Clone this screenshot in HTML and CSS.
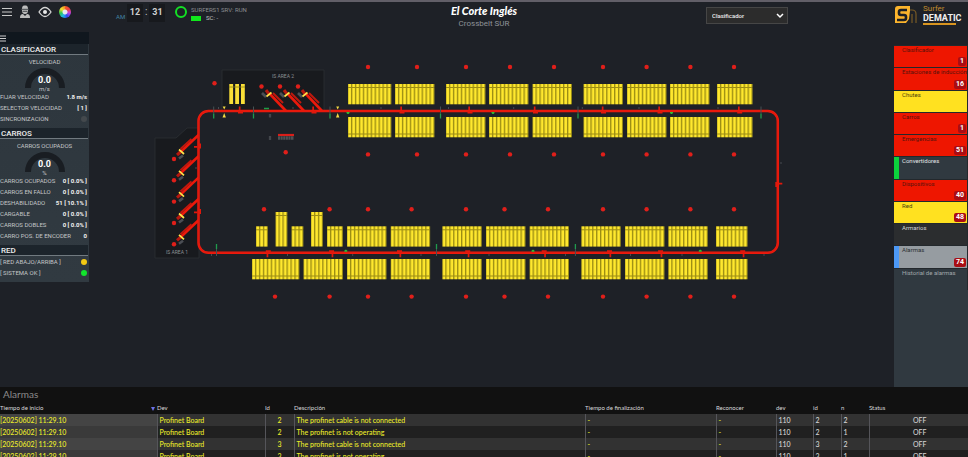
FILE: index.html
```html
<!DOCTYPE html>
<html lang="es">
<head>
<meta charset="utf-8">
<meta name="viewport" content="width=device-width, initial-scale=1">
<title>Crossbelt SUR</title>
<link rel="stylesheet" href="styles.css">
</head>
<body>
<header class="topbar">
  <div class="top-left">
  <div class="tools">
    <button class="tool" aria-label="Menú"><svg width="10" height="10" viewBox="0 0 10 10"><path d="M0 1.5h10M0 5h10M0 8.5h10" stroke="#c9c9c9"/></svg></button>
    <button class="tool" aria-label="Usuario"><svg width="12" height="14" viewBox="0 0 12 14" fill="#bcbcbc"><path d="M3 3.5C3 1 4.500 .5 6 .5S9 1 9 3.500V6C9 8 7.500 9 6 9S3 8 3 6zM1 13c0-3 1-4 3-4l2 2 2-2c2 0 3 1 3 4z"/><path d="M2 4.300h8M3.600 6.300h4.800" stroke="#43464a" fill="none"/></svg></button>
    <button class="tool" aria-label="Vista"><svg width="14" height="12" viewBox="0 0 14 12"><path d="M1 6Q7-3 13 6Q7 15 1 6z" fill="none" stroke="#d5d5d5" stroke-width="1.3"/><circle cx="7" cy="6" r="2" fill="#e8e8e8"/></svg></button>
    <button class="tool" aria-label="Colores"><span class="wheel"></span></button>
  </div>
  <div class="clock"><span class="ampm">AM</span><span class="digits">12</span><span class="colon">:</span><span class="digits">31</span></div>
  <div class="server">
    <span class="ring"></span>
    <div><div>SURFERS1 SRV: RUN</div><div class="sc"><i class="led"></i>SC: -</div></div>
  </div>
  </div>
  <div class="brand"><div class="brand-name">El Corte Inglés</div><div class="brand-sub">Crossbelt SUR</div></div>
  <div class="top-right">
  <div class="picker">
    <select aria-label="Vista activa"><option>Clasificador</option></select>
    <svg class="chevron" width="8" height="6" viewBox="0 0 8 6"><path d="M1 1l3 3 3-3" fill="none" stroke="#fff" stroke-width="1.500"/></svg>
  </div>
  <div class="vendor">
    <svg width="24" height="20" viewBox="0 0 24 20" fill="none"><path d="M4 1h12v5l-1 8-3 4H1V4q0-3 3-3z" fill="#fcb42c"/><path d="M13 5H7Q5 5 5 7v1q0 2 2 2h3q2 0 2 2v1q0 2-2 2H3" stroke="#1d2026" stroke-width="2.600"/><path d="M16 5h2q4 0 4 4v9M18 9v9" stroke="#785a25" stroke-width="1.200"/></svg>
    <div class="vendor-text"><span>Surfer</span><strong>DEMATIC</strong></div>
  </div>
  </div>
</header>

<main class="work">
  <aside class="side">
    <button class="side-menu" aria-label="Panel"><svg width="7" height="7" viewBox="0 0 7 7"><path d="M0 1h6M0 3.500h6M0 6h6" stroke="#ccc"/></svg></button>
    <section>
      <h2>CLASIFICADOR</h2>
      <div class="gauge"><p>VELOCIDAD</p>
        <div class="dial"><svg width="42" height="21" viewBox="0 0 42 21"><path d="M4 21a17 17 0 0 1 34 0" fill="none" stroke="#191d22" stroke-width="6"/></svg><b>0.0</b></div><small>m/s</small></div>
      <dl>
        <div><dt>FIJAR VELOCIDAD</dt><dd>1.8 m/s</dd></div>
        <div><dt>SELECTOR VELOCIDAD</dt><dd>[ 1 ]</dd></div>
        <div><dt>SINCRONIZACIÓN</dt><dd><i class="dot off"></i></dd></div>
      </dl>
    </section>
    <section>
      <h2>CARROS</h2>
      <div class="gauge"><p>CARROS OCUPADOS</p>
        <div class="dial"><svg width="42" height="21" viewBox="0 0 42 21"><path d="M4 21a17 17 0 0 1 34 0" fill="none" stroke="#191d22" stroke-width="6"/></svg><b>0.0</b></div><small>%</small></div>
      <dl>
        <div><dt>CARROS OCUPADOS</dt><dd>0 [ 0.0% ]</dd></div>
        <div><dt>CARROS EN FALLO</dt><dd>0 [ 0.0% ]</dd></div>
        <div><dt>DESHABILIDADO</dt><dd>51 [ 10.1% ]</dd></div>
        <div><dt>CARGABLE</dt><dd>0 [ 0.0% ]</dd></div>
        <div><dt>CARROS DOBLES</dt><dd>0 [ 0.0% ]</dd></div>
        <div><dt>CARRO POS. DE ENCODER</dt><dd>0</dd></div>
      </dl>
    </section>
    <section>
      <h2>RED</h2>
      <dl>
        <div><dt>[ RED ABAJO/ARRIBA ]</dt><dd><i class="dot warn"></i></dd></div>
        <div><dt>[ SISTEMA OK ]</dt><dd><i class="dot ok"></i></dd></div>
      </dl>
    </section>
  </aside>

  <svg class="plant" viewBox="89 32 805 355" role="img" aria-label="Plano del clasificador">
    <defs>
      <pattern id="up" width="3.94" height="21" patternUnits="userSpaceOnUse"><rect width="3.94" height="21" fill="#81750c"/><rect x=".3" width="2.850" height="21" fill="#ffe82e"/><rect y="3" width="3.940" height="1" fill="#9d8d14"/></pattern>
      <pattern id="down" width="3.94" height="21" patternUnits="userSpaceOnUse"><rect width="3.94" height="21" fill="#81750c"/><rect x=".3" width="2.850" height="21" fill="#ffe82e"/><rect y="16.500" width="3.940" height="1" fill="#9d8d14"/></pattern>
      <pattern id="tall" width="3.94" height="35" patternUnits="userSpaceOnUse"><rect width="3.94" height="35" fill="#81750c"/><rect x=".3" width="2.850" height="35" fill="#ffe82e"/><rect y="3" width="3.940" height="1" fill="#9d8d14"/></pattern>
      <g id="u12"><rect width="43.300" height="20.300" fill="url(#up)"/></g>
      <g id="u10"><rect width="39.400" height="20.300" fill="url(#up)"/></g>
      <g id="u9"><rect width="35.500" height="20.300" fill="url(#up)"/></g>
      <g id="u8"><rect width="31.500" height="20.300" fill="url(#up)"/></g>
      <g id="u4"><rect width="15.800" height="20.300" fill="url(#up)"/></g>
      <g id="u3"><rect width="11.800" height="20.300" fill="url(#up)"/></g>
      <g id="t3"><rect width="11.800" height="34.500" fill="url(#tall)"/></g>
      <g id="d12"><rect width="47.300" height="20.300" fill="url(#down)"/></g>
      <g id="d11"><rect width="43.300" height="20.300" fill="url(#down)"/></g>
      <g id="d10"><rect width="39.400" height="20.300" fill="url(#down)"/></g>
      <g id="d9"><rect width="35.500" height="20.300" fill="url(#down)"/></g>
      <g id="d8"><rect width="31.500" height="20.300" fill="url(#down)"/></g>
      <circle id="p" r="2.200" fill="#e01f1a"/>
      <g id="post"><path d="M0-5V2" stroke="#465153"/><path d="M0 2v5" stroke="#1f9b4d" stroke-width="1.300"/></g>
      <g id="stop" fill="#e0180c"><path d="M-.700-4.500h1.700V-1h-1.700zM-1.500 0h5v2.500h-5z"/></g>
      <path id="go" d="M-1.500 1h3v1l-1 1h-1l-1-1z" fill="#32bd35"/>
      <path id="cone" d="M-1.500-5h3L0-2zM0 1.500L1.700 6h-3.400z" fill="#f4d943"/>
      <g id="laneB"><path d="M0 0L-17 -18" stroke="#ec190b" stroke-width="2.600"/><path d="M-3-8L-13-18" stroke="#bf180e" stroke-width="2"/><path d="M-24-18l4 4" stroke="#4b4e54" stroke-width="2.600"/><path d="M-20-21l3 4" stroke="#b6180f" stroke-width="3"/><path d="M-19.500-14.500l5-4" stroke="#ffe44a" stroke-width="1.700"/></g>
      <g id="laneA"><path d="M0 0L-19 18" stroke="#ec190b" stroke-width="2.600"/><path d="M-7 4L-18 14" stroke="#bf180e" stroke-width="2"/><path d="M-19.500 23.500l4-3" stroke="#4b4e54" stroke-width="2.600"/><path d="M-21.500 20l4-3.500" stroke="#b6180f" stroke-width="3"/><path d="M-19.500 14.500l5 4.500" stroke="#ffe44a" stroke-width="1.700"/><use href="#p" x="-24.500" y="24"/></g>
    </defs>

    <path d="M155 138h21l11-10h12v130h-44z" fill="#181a1e" stroke="#2c3034" stroke-width=".8"/>
    <path d="M222 70h102v41H222z" fill="#181a1e" stroke="#2c3034" stroke-width=".8"/>
    <text class="area" x="283" y="78">IS AREA 2</text>
    <text class="area" x="177" y="254">IS AREA 1</text>

    <use href="#laneB" x="286" y="111"/><use href="#laneB" x="304" y="111"/><use href="#laneB" x="322" y="111"/>
    <use href="#laneA" x="198.500" y="135"/><use href="#laneA" x="198.500" y="156.300"/><use href="#laneA" x="198.500" y="177.600"/><use href="#laneA" x="198.500" y="199"/><use href="#laneA" x="198.500" y="220.300"/>

    <rect x="198.500" y="111" width="579.300" height="141.700" rx="10" fill="none" stroke="#f01a0c" stroke-width="2.500"/>
    <rect x="198.500" y="111" width="579.300" height="141.700" rx="10" fill="none" stroke="#c41a12" stroke-width=".4"/>

    <path d="M229.300 84h3.800v20h-3.800zM235.200 84h3.800v20h-3.800zM241 84h3.800v20h-3.800z" fill="#f9df37"/>
    <path d="M229 87h16" stroke="#8e8118" stroke-width=".8"/>

    <g>
      <use href="#u12" transform="translate(348 84)"/><use href="#u10" transform="translate(395 84)"/><use href="#u10" transform="translate(446 84)"/><use href="#u10" transform="translate(489 84)"/><use href="#u10" transform="translate(532.500 84)"/><use href="#u10" transform="translate(583.500 84)"/><use href="#u10" transform="translate(627 84)"/><use href="#u10" transform="translate(670 84)"/><use href="#u9" transform="translate(717 84)"/>
    </g>
    <g>
      <use href="#d11" transform="translate(348 117)"/><use href="#d10" transform="translate(395 117)"/><use href="#d10" transform="translate(446 117)"/><use href="#d10" transform="translate(489 117)"/><use href="#d10" transform="translate(532.500 117)"/><use href="#d10" transform="translate(583.500 117)"/><use href="#d10" transform="translate(627 117)"/><use href="#d10" transform="translate(670 117)"/><use href="#d9" transform="translate(717 117)"/>
    </g>
    <g>
      <use href="#u3" transform="translate(256 226.300)"/><use href="#t3" transform="translate(275.500 212)"/><use href="#u3" transform="translate(291.500 226.300)"/><use href="#t3" transform="translate(311 212)"/><use href="#u4" transform="translate(327 226.300)"/><use href="#u10" transform="translate(347 226.300)"/><use href="#u10" transform="translate(390.700 226.300)"/><use href="#u10" transform="translate(442.300 226.300)"/><use href="#u10" transform="translate(486 226.300)"/><use href="#u10" transform="translate(529.600 226.300)"/><use href="#u10" transform="translate(581.300 226.300)"/><use href="#u10" transform="translate(625 226.300)"/><use href="#u10" transform="translate(668.300 226.300)"/><use href="#u8" transform="translate(716 226.300)"/>
    </g>
    <g>
      <use href="#d12" transform="translate(252 259)"/><use href="#d10" transform="translate(303.500 259)"/><use href="#d10" transform="translate(347 259)"/><use href="#d10" transform="translate(390.700 259)"/><use href="#d10" transform="translate(442.300 259)"/><use href="#d10" transform="translate(486 259)"/><use href="#d10" transform="translate(529.600 259)"/><use href="#d10" transform="translate(581.300 259)"/><use href="#d10" transform="translate(625 259)"/><use href="#d10" transform="translate(668.300 259)"/><use href="#d8" transform="translate(716 259)"/>
    </g>

    <use href="#p" x="214.500" y="83.300"/><use href="#p" x="261.500" y="86.500"/><use href="#p" x="280" y="86.500"/><use href="#p" x="298" y="86.500"/><use href="#p" x="285.700" y="152.300"/>
    <g id="top-row"><use href="#p" x="368" y="67"/><use href="#p" x="417" y="67"/><use href="#p" x="466" y="67"/><use href="#p" x="510" y="67"/><use href="#p" x="554" y="67"/><use href="#p" x="603" y="67"/><use href="#p" x="646.600" y="67"/><use href="#p" x="690.400" y="67"/><use href="#p" x="734" y="67"/></g>
    <use href="#top-row" y="87.400"/>
    <g id="low-row"><use href="#p" x="329.600" y="209.200"/><use href="#p" x="368" y="209.200"/><use href="#p" x="411.600" y="209.200"/><use href="#p" x="466" y="209.200"/><use href="#p" x="504.500" y="209.200"/><use href="#p" x="548" y="209.200"/><use href="#p" x="603" y="209.200"/><use href="#p" x="646.600" y="209.200"/><use href="#p" x="690.400" y="209.200"/><use href="#p" x="734" y="209.200"/></g>
    <use href="#low-row" y="87.400"/><use href="#p" x="264" y="209.200"/><use href="#p" x="275" y="296.600"/>

    <use href="#post" x="213.700" y="111.500"/><use href="#post" x="253.500" y="111.500"/><use href="#post" x="330" y="111.500"/><use href="#post" x="440.500" y="111.500"/><use href="#post" x="578" y="111.500"/><use href="#post" x="761" y="111.500"/>
    <use href="#post" transform="translate(216.500 251) scale(1 -1)"/><use href="#post" transform="translate(436.500 251) scale(1 -1)"/><use href="#post" transform="translate(575.400 251) scale(1 -1)"/>
    <use href="#cone" x="224.200" y="111.500"/><use href="#cone" x="337.700" y="111.500"/>
    <use href="#stop" x="239.500" y="111"/><use href="#stop" x="313" y="111"/><use href="#stop" x="401" y="111"/><use href="#stop" x="469" y="111"/><use href="#stop" x="534.500" y="111"/><use href="#stop" x="602.500" y="111"/><use href="#stop" x="659" y="111"/><use href="#stop" x="738.700" y="111"/>
    <use href="#stop" transform="translate(267.300 252.700) scale(1 -1)"/><use href="#stop" transform="translate(332.600 252.700) scale(-1 -1)"/><use href="#stop" transform="translate(400.500 252.700) scale(-1 -1)"/><use href="#stop" transform="translate(468.700 252.700) scale(-1 -1)"/><use href="#stop" transform="translate(545.200 252.700) scale(-1 -1)"/><use href="#stop" transform="translate(610.500 252.700) scale(-1 -1)"/><use href="#stop" transform="translate(661.600 252.700) scale(-1 -1)"/><use href="#stop" transform="translate(743.700 252.700) scale(-1 -1)"/>
    <use href="#stop" transform="translate(198.500 147) rotate(-90)"/><use href="#stop" transform="translate(198.500 212.500) rotate(-90)"/><use href="#stop" transform="translate(777.800 183.500) rotate(90)"/>
    <use href="#go" x="348" y="111"/><use href="#go" x="493" y="111"/><use href="#go" x="671.500" y="111"/>
    <use href="#go" transform="translate(345.800 252.700) scale(1 -1)"/><use href="#go" transform="translate(533 252.700) scale(1 -1)"/><use href="#go" transform="translate(700.300 252.700) scale(1 -1)"/>
    <path d="M264 108.500h5" stroke="#1d9d48" stroke-width="1.500"/>
    <path d="M278 135h16" stroke="#d91e19" stroke-width="2.200"/>
    <path d="M278 138h16" stroke="#4e5154" stroke-width="3.500" stroke-dasharray="2.100 .5"/>
    <path d="M270 114v3.500M270 136v4" stroke="#42464b" stroke-width="2.300"/>
    <path d="M218.500 107v2M293 107v2M381 107v2M448.500 107v2M513.700 107v2M582.300 107v2M639 107v2M718 107v2M211.500 254v2M287.500 254v2M352.700 254v2M421 254v2M489 254v2M565.500 254v2M630.500 254v2M682 254v2M764 254v2" stroke="#464a50"/>
    <path d="M195 168h2M780 163h2" stroke="#464a50"/>
  </svg>

  <nav class="rail">
    <ul>
      <li class="red"><a href="#">Clasificador</a><b>1</b></li>
      <li class="red"><a href="#">Estaciones de inducción</a><b>16</b></li>
      <li class="yellow"><a href="#">Chutes</a></li>
      <li class="red"><a href="#">Carros</a><b>1</b></li>
      <li class="red"><a href="#">Emergencias</a><b>51</b></li>
      <li class="green"><a href="#">Convertidores</a></li>
      <li class="red"><a href="#">Dispositivos</a><b>40</b></li>
      <li class="yellow"><a href="#">Red</a><b>48</b></li>
      <li class="dark"><a href="#">Armarios</a></li>
      <li class="active"><a href="#">Alarmas</a><b>74</b></li>
      <li class="muted"><a href="#">Historial de alarmas</a></li>
    </ul>
  </nav>
</main>

<section class="alarms">
  <h1>Alarmas</h1>
  <table>
    <colgroup><col class="c-time"><col class="c-dev"><col class="c-id"><col class="c-text"><col class="c-end"><col class="c-ack"><col class="c-num"><col class="c-n"><col class="c-n"><col></colgroup>
    <thead><tr><th class="sorted">Tiempo de inicio</th><th>Dev</th><th>Id</th><th>Descripción</th><th>Tiempo de finalización</th><th>Reconocer</th><th>dev</th><th>id</th><th>n</th><th>Status</th></tr></thead>
    <tbody>
      <tr><td>[20250602] 11:29.10</td><td>Profinet Board</td><td class="num">2</td><td>The profinet cable is not connected</td><td>-</td><td>-</td><td class="w">110</td><td class="w">2</td><td class="w">2</td><td class="state">OFF</td></tr>
      <tr><td>[20250602] 11:29.10</td><td>Profinet Board</td><td class="num">2</td><td>The profinet is not operating</td><td>-</td><td>-</td><td class="w">110</td><td class="w">2</td><td class="w">1</td><td class="state">OFF</td></tr>
      <tr><td>[20250602] 11:29.10</td><td>Profinet Board</td><td class="num">3</td><td>The profinet cable is not connected</td><td>-</td><td>-</td><td class="w">110</td><td class="w">3</td><td class="w">2</td><td class="state">OFF</td></tr>
      <tr><td>[20250602] 11:29.10</td><td>Profinet Board</td><td class="num">3</td><td>The profinet is not operating</td><td>-</td><td>-</td><td class="w">110</td><td class="w">3</td><td class="w">1</td><td class="state">OFF</td></tr>
    </tbody>
  </table>
</section>
</body>
</html>
```
FILE: styles.css
```css
* { box-sizing: border-box; }
body {
  margin: 0;
  height: 100vh;
  display: flex;
  flex-direction: column;
  overflow: hidden;
  background: #1e2127;
  color: #c4c6c8;
  font: 6px/11px Roboto, "Liberation Sans", sans-serif;
}
h1, h2, p, dl, dd, ul { margin: 0; padding: 0; }
button { padding: 0; border: 0; background: none; }
svg { display: block; }

.topbar {
  flex: 0 0 32px;
  display: grid;
  grid-template-columns: 1fr auto 1fr;
  border-top: 2px solid #625f68;
}
.top-left { display: flex; }
.top-right { display: flex; justify-content: flex-end; }
.tools { display: flex; align-items: center; gap: 7px; width: 116px; height: 20px; padding-left: 2px; }
.wheel {
  display: block;
  width: 12px;
  height: 12px;
  border-radius: 50%;
  background: radial-gradient(circle, #e8e8f0 0 2px, transparent 3px), conic-gradient(#f05a28, #f04040, #c040e0, #3048f0, #20b8e8, #30c850, #f0e030, #f09020);
}
.clock { display: flex; gap: 2px; width: 59px; padding-top: 2px; height: 20px; }
.ampm { align-self: flex-end; width: 9px; line-height: 10px; color: #4283a5; }
.digits { width: 16px; background: #17191d; text-align: center; font: bold 9px/17px Roboto, sans-serif; color: #cfcfcf; }
.colon { font: 10px/16px Roboto, sans-serif; }
.server { display: flex; gap: 4px; padding-top: 4px; line-height: 8px; color: #8b8e92; }
.ring { width: 12px; height: 12px; border: 2px solid #13e024; border-radius: 50%; }
.sc { display: flex; align-items: center; gap: 5px; color: #c0c2c4; }
.led { width: 10px; height: 5px; background: #10e81c; }
.brand { text-align: center; white-space: nowrap; }
.brand-name { font: italic 900 11px/18px Lato, sans-serif; color: #fff; }
.brand-sub { font-size: 8px; line-height: 8px; color: #8f9398; }
.picker { position: relative; width: 82px; height: 17px; margin: 5px 106px 0 0; }
.picker select {
  appearance: none;
  width: 100%;
  height: 100%;
  padding: 0 5px;
  border: 1px solid #464646;
  border-radius: 0;
  background: #2c2c2c;
  color: #eee;
  font: 500 6px/15px Roboto, sans-serif;
}
.chevron { position: absolute; right: 4px; top: 6px; pointer-events: none; }
.vendor { display: flex; gap: 5px; width: 74px; padding-top: 3px; }
.vendor-text { display: flex; flex-direction: column; align-items: flex-start; }
.vendor-text span { font-size: 8px; line-height: 8px; color: #c28c2d; }
.vendor-text strong { font-size: 9px; line-height: 10px; color: #f0f0f0; }
.vendor-text::after { content: ""; width: 33px; height: 2px; background: #d99520; }

.work { flex: 1 1 0; min-height: 0; display: flex; align-items: flex-start; }
.side { flex: 0 0 89px; background: linear-gradient(#2d363d, #313a41); }
.side-menu { display: flex; align-items: center; width: 100%; height: 12px; background: #10171e; }
.side section { padding-bottom: 4px; }
.side h2 { height: 11px; margin: 0 1px 0 0; padding-left: 1px; border-bottom: 1px solid #717a80; background: #1c242b; font: 500 8px/11px Roboto, sans-serif; color: #eee; }
.gauge { padding-top: 1px; text-align: center; }
.dial { position: relative; display: flex; justify-content: center; height: 19px; }
.dial b { position: absolute; bottom: 1px; font-size: 9px; line-height: 10px; color: #fff; }
.gauge small { display: block; font-size: 6px; line-height: 5px; }
.side dl div { display: flex; justify-content: space-between; align-items: center; height: 11px; padding-right: 2px; white-space: nowrap; }
.side dd { font-weight: 700; color: #f2f2f2; }
.dot { display: block; width: 6px; height: 6px; border-radius: 50%; }
.off { background: #44494d; }
.warn { background: #f4c913; }
.ok { background: #12e42c; }

.plant { flex: 1 1 0; min-width: 0; height: 100%; }
.area { font: 5px Roboto, sans-serif; fill: #8b8f94; text-anchor: middle; }

.rail { flex: 0 0 74px; align-self: stretch; margin-top: 13px; overflow: hidden; background: #303940; }
.rail ul { display: grid; grid-template-columns: minmax(0, 1fr); grid-template-rows: repeat(11, 1fr); height: 245px; list-style: none; }
.rail li { position: relative; padding-left: 8px; border: solid #23282c; border-width: 1px 1px 0 0; line-height: 8px; white-space: nowrap; }
.rail a { color: inherit; text-decoration: none; }
.rail b { position: absolute; right: 1px; bottom: 1px; min-width: 8px; padding: 0 2px; border-radius: 2px; background: #a90d14; color: #fff; font-size: 7px; line-height: 9px; text-align: center; }
.red { background: #ee1600; color: #57130d; }
.yellow { background: #ffe120; color: #4d430d; }
.green { color: #e1e3e4; box-shadow: inset 5px 0 #0bd23c; }
.dark { background: #2b2d2f; color: #d4d6d7; }
.active { background: #969ca1; color: #2b3034; box-shadow: inset 5px 0 #4c98f5; }
.muted { color: #a2a7ab; }

.alarms { flex: 0 0 70px; overflow: hidden; background: #111; }
.alarms h1 { padding-left: 3px; font: 10px/15px Lato, sans-serif; color: #8b8b8b; }
.alarms table { width: 100%; table-layout: fixed; border-collapse: collapse; font: 7px/12px Lato, sans-serif; white-space: nowrap; }
.alarms th { height: 12px; padding: 0; text-align: left; font-weight: 400; font-size: 6px; line-height: 12px; color: #d9d9d9; }
.alarms td { height: 12px; padding: 0 0 0 2px; border-left: 1px solid #55555a; font-weight: 500; color: #ecec2a; }
.alarms td:first-child { padding-left: 0; border-left: 0; }
.alarms tr:nth-child(odd) td { background: #323232; }
.alarms tr:nth-child(even) td { background: #202020; }
.alarms tr:nth-child(odd) td:first-child { background: #444; }
.alarms tr:nth-child(even) td:first-child { background: #3a3a3a; }
.alarms .num { padding-right: 12px; text-align: right; }
.alarms .w, .alarms .state { color: #d5d5d5; }
.alarms .state { text-align: center; }
.sorted::after { content: ""; float: right; margin: 5px 2px 0 0; border: 2px solid transparent; border-top: 4px solid #6a70e8; }
.c-time { width: 157px; }
.c-dev { width: 108px; }
.c-id { width: 29px; }
.c-text { width: 291px; }
.c-end { width: 131px; }
.c-ack { width: 60px; }
.c-num { width: 37px; }
.c-n { width: 28px; }
```
